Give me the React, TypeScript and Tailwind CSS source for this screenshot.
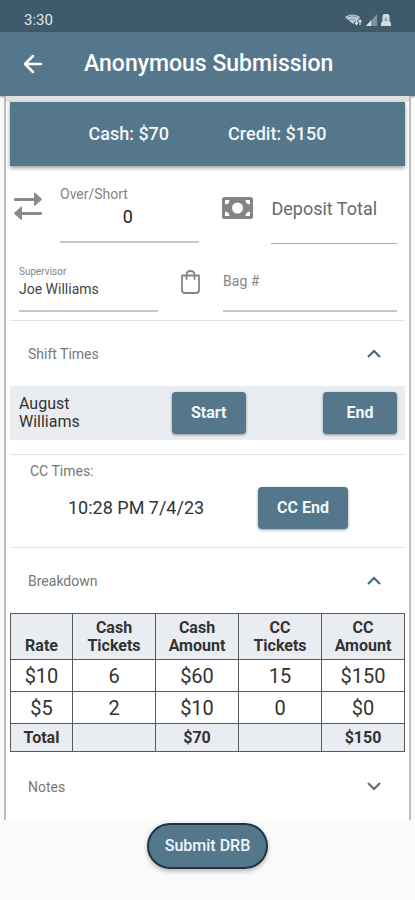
import { useState } from 'react'
import type { ReactNode } from 'react'

interface BreakdownRow {
  rate: string
  cashTickets: number
  cashAmount: string
  ccTickets: number
  ccAmount: string
}

const rows: BreakdownRow[] = [
  { rate: '$10', cashTickets: 6, cashAmount: '$60', ccTickets: 15, ccAmount: '$150' },
  { rate: '$5', cashTickets: 2, cashAmount: '$10', ccTickets: 0, ccAmount: '$0' },
]

const cell = 'border border-[#555b5f] p-0'
const headCell = 'border border-[#555b5f] px-2 pt-0 pb-1'

function StatusBar() {
  return (
    <div className="flex h-8 items-center justify-between bg-[#3f5b6b] px-6 pt-2 text-[#dfe8ed]">
      <span className="text-[15px] leading-6">3:30</span>
      <div className="flex items-center gap-1">
        <svg width="17" height="14" viewBox="0 0 17 14" fill="currentColor" aria-hidden="true">
          <path d="M0 4C4 .5 11 .5 15 4l-2.500 3.500-1-1L8 11Z" opacity=".8" />
          <path d="M2.500 4.500c3-2 7-2 10 0M4.500 7c2-1.300 4-1.300 6 0" fill="none" stroke="#3f5b6b" strokeWidth=".6" />
          <path d="M11.500 6v5m-1.500-1.500 1.500 2 1.500-2M15 12V7.500m-1.500 1.500L15 7l1.500 2" fill="none" stroke="currentColor" strokeWidth="1.200" />
        </svg>
        <svg width="11" height="12" viewBox="0 0 11 12" fill="currentColor" aria-hidden="true">
          <path d="M0 12 11 0v12Z" opacity=".4" />
          <path d="M0 12 5 6.500V12Z" />
        </svg>
        <svg width="10" height="12" viewBox="0 0 10 12" fill="currentColor" aria-hidden="true">
          <path d="M3 0h4l1.500 1.500V7L10 9v3H0V9l1.500-2V1.500Z" opacity=".9" />
          <path d="M5 3v4M3.500 5.500 5 7l1.500-1.500" fill="none" stroke="#6f8896" />
        </svg>
      </div>
    </div>
  )
}

function SwapIcon() {
  return (
    <svg className="shrink-0" width="28" height="30" viewBox="0 0 28 30" fill="#8b8b8b" aria-hidden="true">
      <path d="M1 7h19V2.500q0-1.500 1.300-.6l6 5.400q1 1 0 2l-6 5.300q-1.300 1-1.300-.6V10H1Q0 10 0 8.500T1 7Z" />
      <path d="M27 21H8v-4.500q0-1.500-1.300-.6l-6 5.400q-1 1 0 2l6 5.300Q8 29.600 8 28v-4h19q1 0 1-1.500T27 21Z" />
    </svg>
  )
}

function CashIcon() {
  return (
    <svg className="shrink-0" width="31" height="22" viewBox="0 0 31 22" aria-hidden="true">
      <rect width="31" height="22" rx="2.500" fill="#848484" />
      <circle cx="15.500" cy="11" r="5.500" fill="#fff" />
      <path
        d="M3 3h4.500Q7.500 7 3 7.500ZM28 3h-4.500q0 4 4.500 4.500ZM3 19h4.500q0-4-4.500-4.500ZM28 19h-4.500q0-4 4.500-4.500Z"
        fill="#fff"
      />
    </svg>
  )
}

function BagIcon() {
  return (
    <svg
      className="shrink-0"
      width="19"
      height="24"
      viewBox="0 0 19 24"
      fill="none"
      stroke="#858585"
      strokeWidth="1.800"
      strokeLinecap="round"
      aria-hidden="true"
    >
      <path d="M1 5.500h17v14.500q0 3-3 3H4q-3 0-3-3Z" strokeLinejoin="round" />
      <path d="M5.500 9V5q0-4 4-4t4 4v4" />
    </svg>
  )
}

function Chevron({ open }: { open: boolean }) {
  return (
    <svg width="14" height="9" viewBox="0 0 14 9" fill="none" strokeWidth="2" aria-hidden="true">
      {open ? <path d="m1 8 6-6 6 6" stroke="#3d6b7e" /> : <path d="m1 1 6 6 6-6" stroke="#666" />}
    </svg>
  )
}

interface SectionProps {
  title: string
  defaultOpen?: boolean
  children?: ReactNode
}

function Section({ title, defaultOpen = false, children }: SectionProps) {
  const [open, setOpen] = useState(defaultOpen)

  return (
    <section>
      <button
        type="button"
        aria-expanded={open}
        onClick={() => setOpen(!open)}
        className="flex h-[65px] w-full items-center justify-between pr-6 pl-[18px] text-sm text-[#777]"
      >
        {title}
        <Chevron open={open} />
      </button>
      {open && children}
    </section>
  )
}

function ActionButton({ children }: { children: ReactNode }) {
  return (
    <button
      type="button"
      className="h-[42px] rounded bg-[#54778c] px-[19px] text-base font-bold text-[#f1f6f9] shadow-[0_1px_3px_rgba(0,0,0,0.4)]"
    >
      {children}
    </button>
  )
}

export default function App() {
  return (
    <div className="flex min-h-screen flex-col bg-[#fafafa] font-['Roboto',sans-serif] text-[#333]">
      <StatusBar />
      <header className="flex h-16 items-center bg-[#54778c] pl-[23px] text-white shadow-[0_1px_2px_rgba(0,0,0,0.4)]">
        <button type="button" aria-label="Back" className="mr-[41px]">
          <svg
            width="20"
            height="20"
            viewBox="0 0 20 20"
            fill="none"
            stroke="currentColor"
            strokeWidth="2.500"
            strokeLinecap="round"
            strokeLinejoin="round"
            aria-hidden="true"
          >
            <path d="M18 10H2m8-8-8 8 8 8" />
          </svg>
        </button>
        <h1 className="text-[23px] font-medium">Anonymous Submission</h1>
      </header>

      <main className="mx-1 border-x-2 border-[#bdbdbd] bg-white">
        <div className="h-[6px] bg-[#e1e1e1]" />

        <div className="px-1">
          <div className="flex h-16 items-center justify-center gap-[59px] bg-[#54778c] text-lg font-medium text-[#f1f6f9] shadow-[0_2px_4px_rgba(0,0,0,0.4)]">
            <span>Cash: $70</span>
            <span>Credit: $150</span>
          </div>

          <div className="flex items-center pt-[18px] pr-2 pl-1">
            <div className="pb-4">
              <SwapIcon />
            </div>
            <div className="ml-[18px] flex-10">
              <label htmlFor="over-short" className="block text-sm leading-4 text-[#858585]">
                Over/Short
              </label>
              <input
                id="over-short"
                defaultValue="0"
                className="block h-[41px] w-full border-b-2 border-[#c8c8c8] pr-1 pb-[10px] text-center text-lg text-[#222] outline-none"
              />
            </div>
            <div className="ml-[23px] pb-3">
              <CashIcon />
            </div>
            <input
              aria-label="Deposit Total"
              placeholder="Deposit Total"
              className="mt-[2px] ml-[18px] h-[58px] w-0 flex-9 border-b border-[#aaa] pb-3 text-lg outline-none placeholder:text-[#696969]"
            />
          </div>

          <div className="flex items-center border-b border-[#e4e4e4] pt-5 pr-2 pb-2 pl-[9px]">
            <div className="flex-4">
              <label htmlFor="supervisor" className="block text-[10px] leading-4 text-[#858585]">
                Supervisor
              </label>
              <input
                id="supervisor"
                defaultValue="Joe Williams"
                className="block h-8 w-full border-b-2 border-[#c8c8c8] pb-3 text-sm text-[#444] outline-none"
              />
            </div>
            <div className="mx-[23px] pb-3">
              <BagIcon />
            </div>
            <input
              aria-label="Bag #"
              placeholder="Bag #"
              className="h-12 w-0 flex-5 border-b-2 border-[#c8c8c8] pb-3 text-sm outline-none placeholder:text-[#858585]"
            />
          </div>

          <Section title="Shift Times" defaultOpen>
            <div className="flex h-[54px] items-center bg-[#e9edf1] pr-2 pl-[9px]">
              <p className="w-[153px] text-base leading-[18px]">
                August
                <br />
                Williams
              </p>
              <ActionButton>Start</ActionButton>
              <div className="ml-auto flex w-[74px] flex-col">
                <ActionButton>End</ActionButton>
              </div>
            </div>
          </Section>

          <div className="mt-[14px] h-[94px] border-y border-[#e4e4e4] pt-[6px]">
            <p className="pl-5 text-sm text-[#777]">CC Times:</p>
            <div className="flex items-center pt-[6px] pl-[58px]">
              <time className="w-[190px] text-lg text-[#333]">10:28 PM 7/4/23</time>
              <ActionButton>CC End</ActionButton>
            </div>
          </div>

          <Section title="Breakdown" defaultOpen>
            <table className="w-full table-fixed border-collapse text-center text-[#333]">
              <colgroup>
                <col className="w-[62px]" />
                <col />
                <col />
                <col />
                <col />
              </colgroup>
              <thead>
                <tr className="h-[46px] bg-[#e9edf1] align-bottom text-base leading-[18px] font-bold">
                  <th className={headCell}>Rate</th>
                  <th className={headCell}>Cash Tickets</th>
                  <th className={headCell}>Cash Amount</th>
                  <th className={headCell}>
                    CC
                    <br />
                    Tickets
                  </th>
                  <th className={headCell}>
                    CC
                    <br />
                    Amount
                  </th>
                </tr>
              </thead>
              <tbody>
                {rows.map((row) => (
                  <tr key={row.rate} className="h-8 text-xl leading-6">
                    <td className={cell}>{row.rate}</td>
                    <td className={cell}>{row.cashTickets}</td>
                    <td className={cell}>{row.cashAmount}</td>
                    <td className={cell}>{row.ccTickets}</td>
                    <td className={cell}>{row.ccAmount}</td>
                  </tr>
                ))}
              </tbody>
              <tfoot>
                <tr className="h-7 bg-[#e9edf1] text-base leading-5 font-bold">
                  <th className={cell}>Total</th>
                  <td className={cell} />
                  <td className={cell}>$70</td>
                  <td className={cell} />
                  <td className={cell}>$150</td>
                </tr>
              </tfoot>
            </table>
          </Section>

          <div className="pt-[2px] pb-px">
            <Section title="Notes" />
          </div>
        </div>
      </main>

      <footer className="flex justify-center pt-[3px] pb-7">
        <button
          type="button"
          className="h-[46px] rounded-full border-2 border-[#203541] bg-[#54778c] px-4 text-base font-medium text-[#f1f6f9] shadow-[0_2px_5px_rgba(0,0,0,0.3)]"
        >
          Submit DRB
        </button>
      </footer>
    </div>
  )
}
